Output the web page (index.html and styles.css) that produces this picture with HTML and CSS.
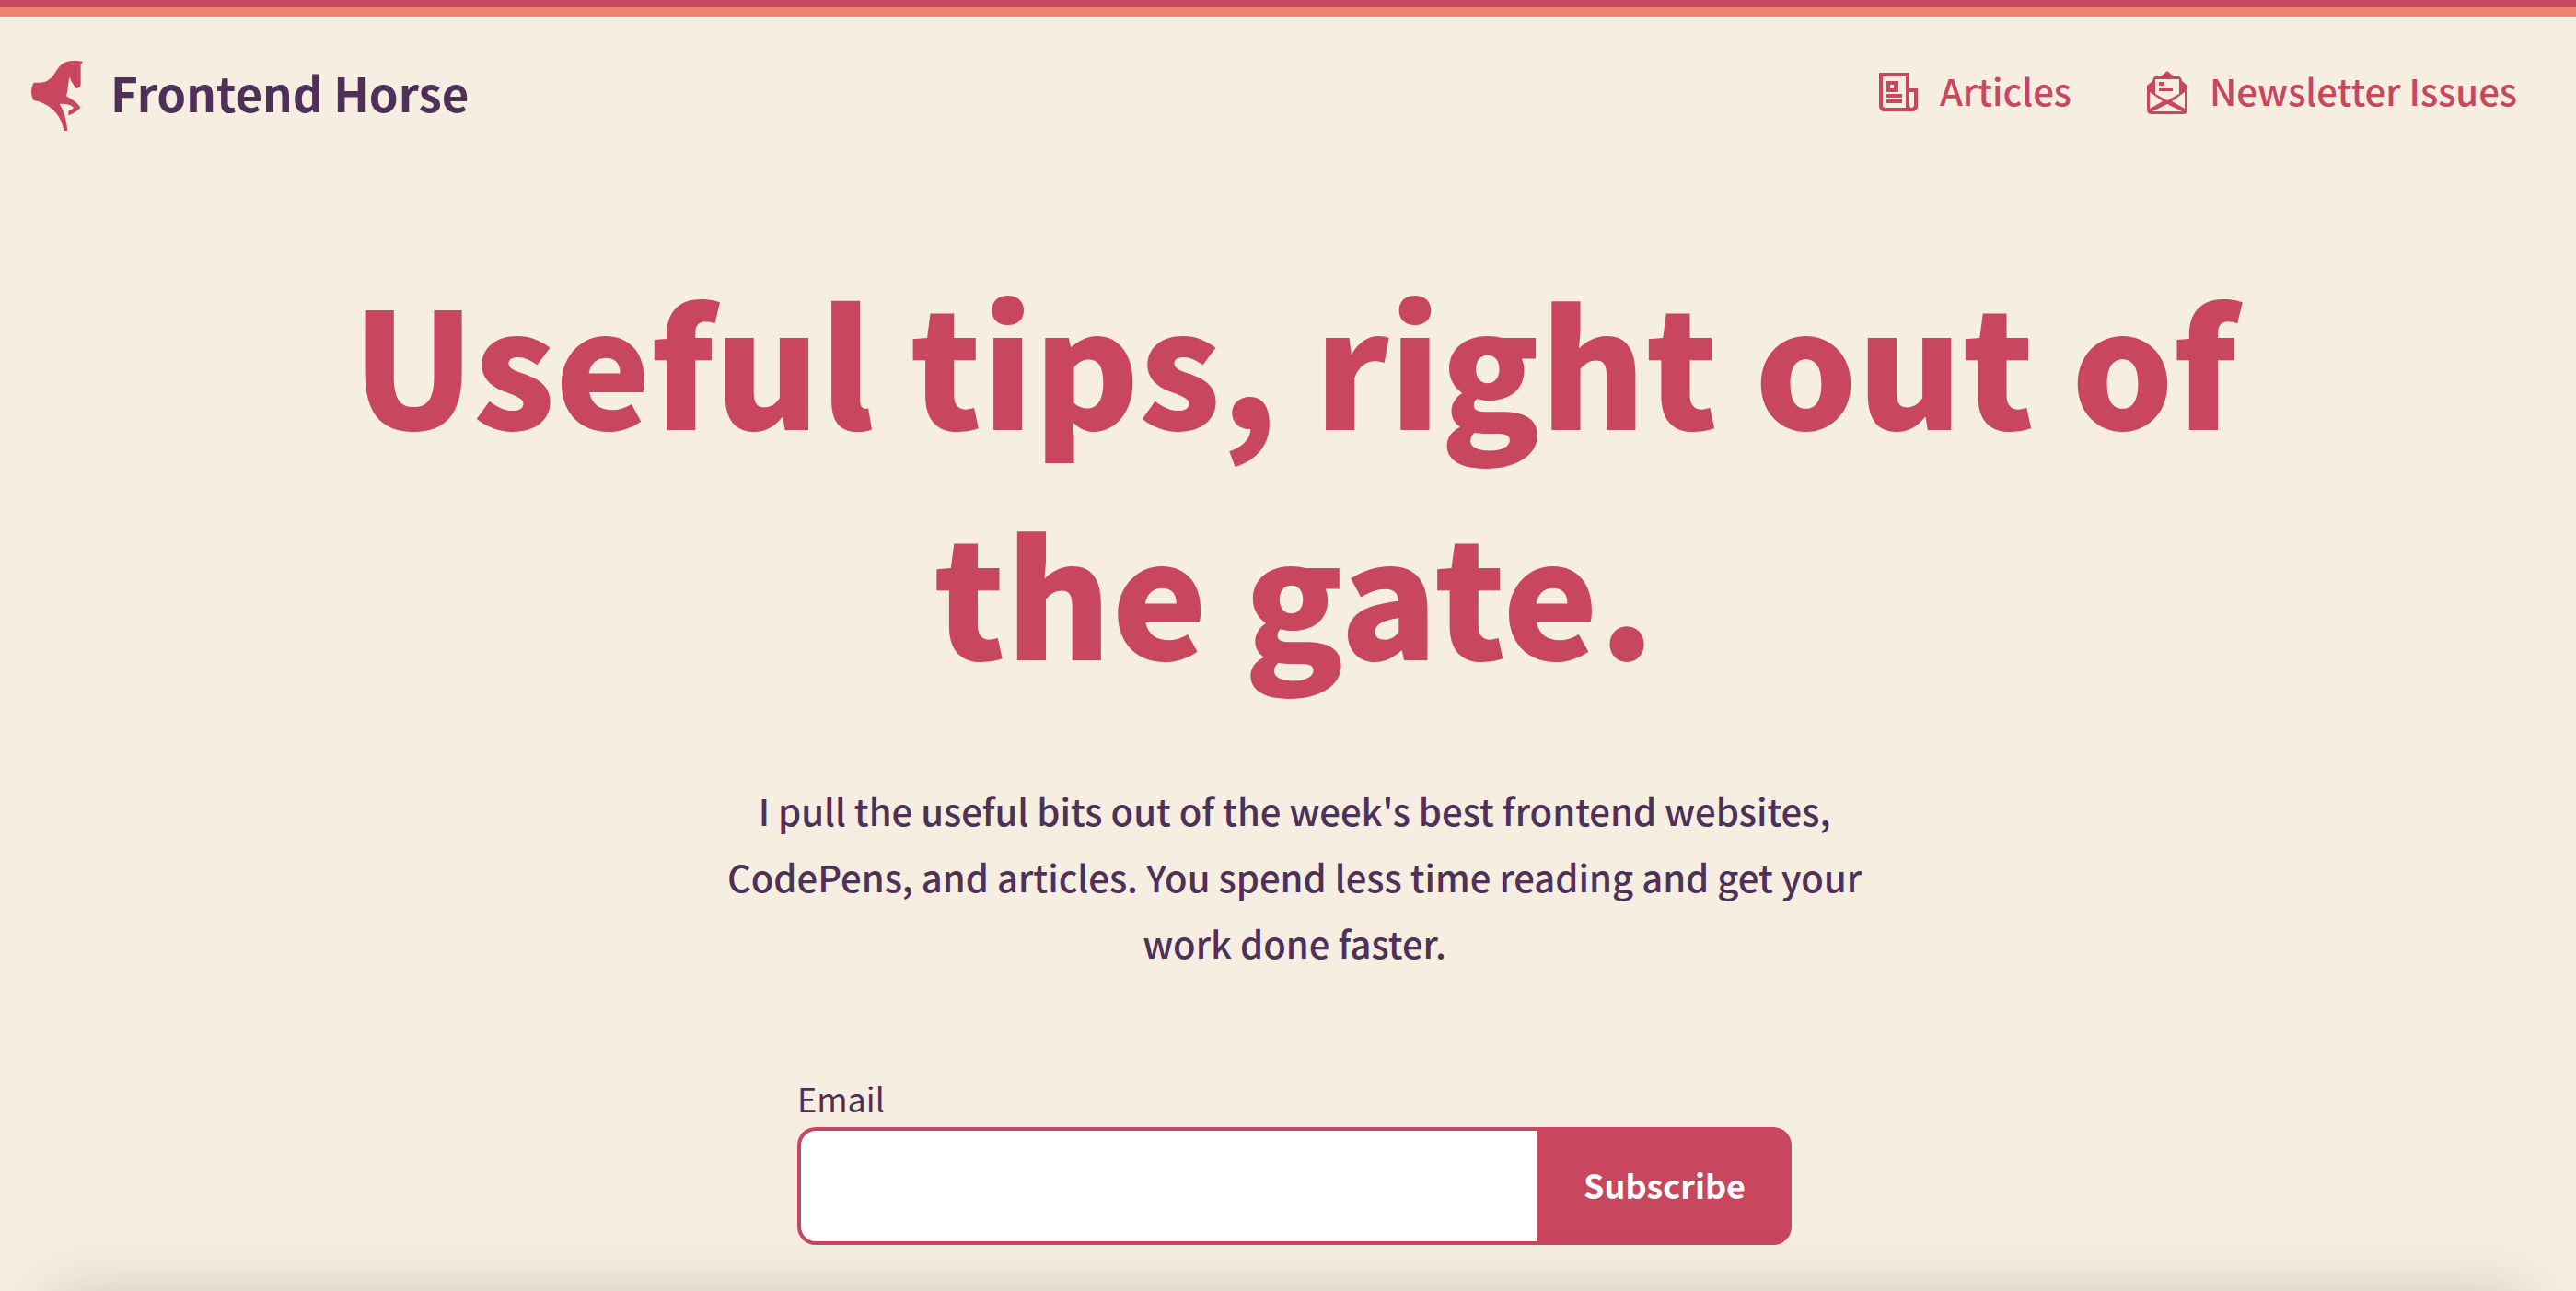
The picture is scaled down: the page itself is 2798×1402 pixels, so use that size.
FILE: index.html
```html
<!DOCTYPE html>
<html lang="en">
<head>
<meta charset="utf-8">
<meta name="viewport" content="width=device-width, initial-scale=1">
<title>Frontend Horse</title>
<link rel="stylesheet" href="styles.css">
</head>
<body>
<div class="page">
  <header class="site-header">
    <a class="logo" href="#">
      <svg class="logo-mark" viewBox="42 30 168 228" aria-hidden="true"><path d="M210 33 L203 42 V106 C203 113 199 119 192 120 L188 119 C180 108 171 99 167 82 C161 98 163 126 156 144 C171 156 190 162 202 182 C191 196 178 202 163 208 V194 C171 190 177 187 180 182 C167 171 151 169 134 171 C149 194 157 226 160 258 H148 C143 218 111 169 50 159 C39 141 40 118 50 101 C82 103 99 100 119 70 C133 48 142 30 182 30 C194 30 202 31 210 33Z"/></svg>
      <span class="logo-text">Frontend Horse</span>
    </a>
    <nav class="nav">
      <a class="nav-link" href="#">
        <svg class="icon-articles" viewBox="0 0 42 42" aria-hidden="true"><path fill-rule="evenodd" d="M0 0H33V17H42V36Q42 42 36 42H6Q0 42 0 36ZM4 4V35Q4 38 7 38H29V4ZM33 21V35Q33 38 35 38Q38 38 38 35V21ZM8 9H21V21H8ZM12 13V17H16V13ZM8 23H25V27H8ZM8 29H25V33H8Z"/></svg>
        <span class="nav-text">Articles</span>
      </a>
      <a class="nav-link" href="#">
        <svg class="icon-mail" viewBox="0 0 44 47" aria-hidden="true"><path fill-rule="evenodd" d="M22 0L29 6H34Q37 6 38 11L44 16V42Q44 47 39 47H5Q0 47 0 42V16L6 11Q7 6 10 6H15ZM9 9V25L22 32L35 25V9ZM3 23V41L17 33ZM41 23L27 33L41 41ZM22 36L6 44H38ZM13 12H19V16H13ZM13 19H28V22H13Z"/></svg>
        <span class="nav-text">Newsletter Issues</span>
      </a>
    </nav>
  </header>
  <main class="hero">
    <h1 class="title">Useful tips, right out of the gate.</h1>
    <p class="intro">I pull the useful bits out of the week's best frontend websites, CodePens, and articles. You spend less time reading and get your work done faster.</p>
    <form class="signup">
      <label class="signup-label" for="email">Email</label>
      <div class="signup-row">
        <input class="signup-input" id="email" type="email">
        <button class="signup-button" type="submit">Subscribe</button>
      </div>
    </form>
  </main>
</div>
</body>
</html>
```
FILE: styles.css
```css
:root {
  --red: #c8475f;
  --coral: #ee8371;
  --purple: #4e3059;
  --cream: #f6eee0;
}

* { box-sizing: border-box; }

body {
  margin: 0;
  background: var(--cream);
  color: var(--purple);
  font-family: "Noto Sans CJK JP", "Open Sans", sans-serif;
}

.page {
  position: relative;
  min-height: 100vh;
  overflow: hidden;
  border-top: 8px solid var(--red);
}

.page::before {
  content: "";
  display: block;
  height: 10px;
  background: var(--coral);
}

/* shadow cast upwards by the fold */
.page::after {
  content: "";
  position: absolute;
  top: 100%;
  left: 56px;
  right: 56px;
  height: 200px;
  box-shadow: 0 0 60px rgba(50, 50, 30, .18);
  pointer-events: none;
}

.site-header {
  display: flex;
  justify-content: space-between;
  align-items: center;
  padding: 48px 62px 48px 34px;
}

.logo {
  display: flex;
  align-items: center;
  gap: 30px;
  color: var(--purple);
  font-size: 51px;
  font-weight: 700;
  line-height: 64px;
  text-decoration: none;
}

.logo-mark {
  width: 56px;
  height: 76px;
  fill: var(--red);
}

.logo-text { padding-bottom: 8px; }

.nav {
  display: flex;
  gap: 82px;
  padding-bottom: 8px;
}

.nav-link {
  display: flex;
  align-items: center;
  gap: 24px;
  color: var(--red);
  font-size: 40px;
  font-weight: 500;
  line-height: 64px;
  text-decoration: none;
}

.nav-link svg { fill: currentColor; }

.nav-text { padding-bottom: 4px; }

.icon-articles {
  width: 42px;
  height: 42px;
}

.icon-mail {
  width: 44px;
  height: 47px;
}

.nav-link:last-child { padding-right: 2px; }

.hero {
  display: flex;
  flex-direction: column;
  align-items: center;
  padding: 76px 32px 48px 46px;
}

.title {
  max-width: 2100px;
  margin: 0;
  color: var(--red);
  font-size: 175px;
  font-weight: 900;
  line-height: 250px;
  text-align: center;
}

.intro {
  max-width: 1280px;
  margin: 78px 0 100px;
  font-size: 40px;
  font-weight: 500;
  line-height: 72px;
  text-align: center;
}

.signup {
  width: 100%;
  max-width: 1080px;
}

.signup-label {
  display: block;
  font-size: 36px;
  line-height: 64px;
}

.signup-row {
  display: flex;
  height: 128px;
}

.signup-input {
  flex: 1;
  min-width: 0;
  padding: 0 32px;
  border: 4px solid var(--red);
  border-right: 0;
  border-radius: 20px 0 0 20px;
  background: #fff;
  color: inherit;
  font: inherit;
  font-size: 36px;
}

.signup-button {
  padding: 0 50px 4px;
  border: 0;
  border-radius: 0 20px 20px 0;
  background: var(--red);
  color: #fff;
  font: inherit;
  font-size: 36px;
  font-weight: 700;
}
```
